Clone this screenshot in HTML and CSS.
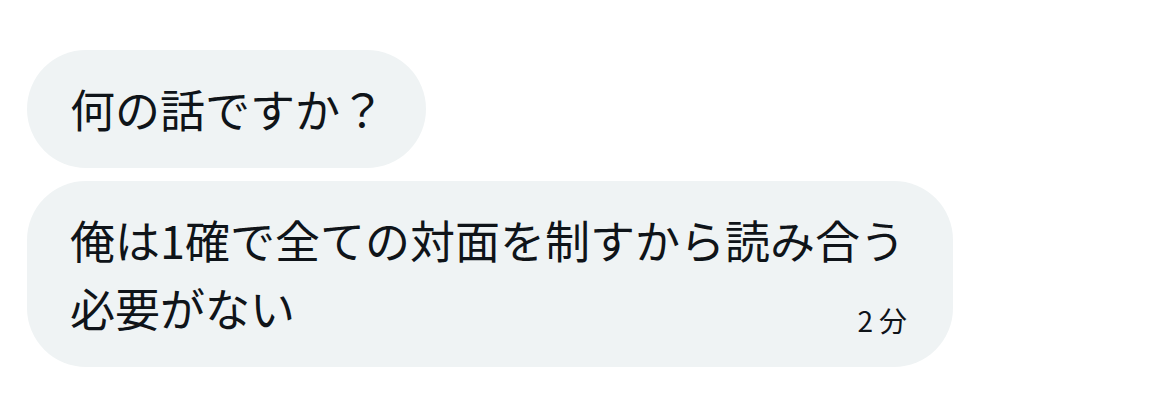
FILE: index.html
```html
<!DOCTYPE html>
<html lang="ja">
<head>
    <meta charset="UTF-8">
    <meta name="viewport" content="width=device-width, initial-scale=1.0">
    <title>メッセージ</title>
    <link rel="stylesheet" href="styles.css">
</head>
<body>
<div class="thread">
    <div class="bubble">何の話ですか？</div>
    <div class="bubble bubble-long">
        俺は1確で全ての対面を制すから読み合う必要がない
        <span class="time">2分</span>
    </div>
</div>
</body>
</html>
```

FILE: styles.css
```css
body {
    margin: 0;
    background-color: #fff;
    color: #0f1419;
    font-family: "Noto Sans CJK JP", "Noto Sans", sans-serif;
}

.thread {
    display: flex;
    flex-direction: column;
    align-items: flex-start;
    gap: 13px;
    padding: 50px 0 0 27px;
}

.bubble {
    background-color: #eff3f4;
    border-radius: 59px;
    padding: 25px 41px 25px 43px;
    font-size: 45px;
    line-height: 68px;
    max-width: 846px;
}

.bubble-long {
    position: relative;
    padding-right: 37px;
}

.time {
    position: absolute;
    right: 40px;
    bottom: 33px;
    font-size: 28px;
    line-height: 1;
    letter-spacing: 6px;
}
```
